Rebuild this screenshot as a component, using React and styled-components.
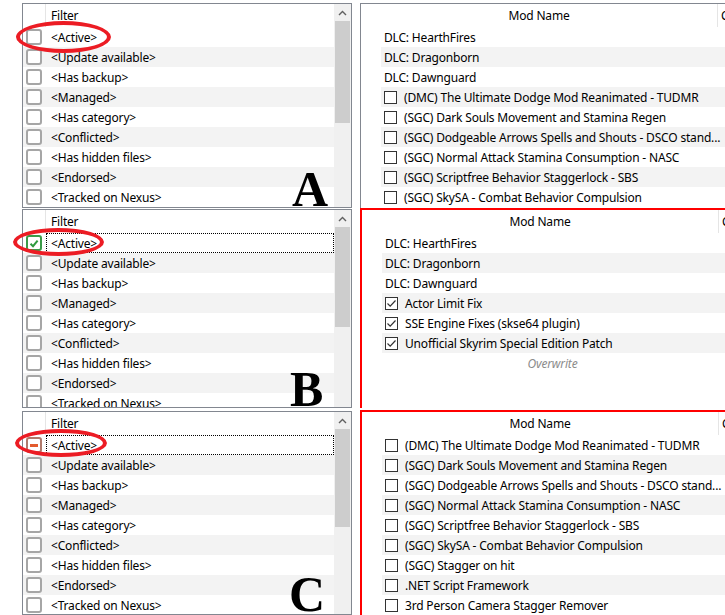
import React from 'react';
import styled, { createGlobalStyle } from 'styled-components';

const GlobalStyle = createGlobalStyle`
  html, body {
    margin: 0;
    padding: 0;
    background: #fff;
  }
  body {
    font-family: "Noto Sans", "Open Sans", sans-serif;
    font-size: 12px;
    letter-spacing: -0.18px;
    color: #000;
  }
`;

const Page = styled.div`
  width: 725px;
  height: 615px;
  overflow: hidden;
  display: flex;
  flex-direction: column;
  background: #fff;
`;

// one cropped screenshot (A, B or C)
const Shot = styled.section`
  position: relative;
  flex: none;
  height: ${p => p.$height}px;
  display: grid;
  grid-template-columns: 330px 380px;
  column-gap: 8px;
  padding-left: 22px;
  box-sizing: border-box;
  overflow: hidden;
`;

const Letter = styled.div`
  position: absolute;
  left: ${p => p.$x}px;
  top: ${p => p.$y}px;
  font-family: "Liberation Serif", "Times New Roman", serif;
  font-weight: bold;
  font-size: 50px;
  letter-spacing: 0;
  line-height: 1;
  color: #000;
  pointer-events: none;
`;

const Ring = styled.div`
  position: absolute;
  left: ${p => p.$x}px;
  top: ${p => p.$y}px;
  width: ${p => p.$w}px;
  height: ${p => p.$h}px;
  box-sizing: border-box;
  border: 4.5px solid #ec1c24;
  border-radius: 50%;
  pointer-events: none;
`;

/* ---------- filter list ---------- */

const FilterFrame = styled.div`
  margin-top: ${p => p.$top}px;
  border: 1px solid #828790;
  display: grid;
  grid-template-columns: 1fr 17px;
  background: #fff;
  overflow: hidden;
  min-height: 0;
`;

const FilterList = styled.div`
  display: flex;
  flex-direction: column;
  min-width: 0;
  overflow: hidden;
`;

const FilterHeader = styled.div`
  flex: none;
  height: 23px;
  display: grid;
  grid-template-columns: 23px 1fr;
  align-items: center;
`;

const HeaderGap = styled.div`
  height: 100%;
  border-right: 1px solid #e5e5e5;
`;

const HeaderText = styled.div`
  padding-left: 5px;
`;

const FilterRow = styled.div`
  flex: none;
  height: 20px;
  display: grid;
  grid-template-columns: 23px 1fr;
  align-items: center;
  background: ${p => (p.$alt ? '#f3f3f3' : '#fff')};
`;

const CheckCell = styled.div`
  padding-left: 3px;
  display: flex;
  align-items: center;
`;

const FilterLabel = styled.div`
  height: 20px;
  box-sizing: border-box;
  display: flex;
  align-items: center;
  padding-left: 4px;
  border: 1px ${p => (p.$focus ? 'dotted #000' : 'solid transparent')};
  white-space: nowrap;
`;

const TriBox = styled.div`
  width: 16px;
  height: 16px;
  box-sizing: border-box;
  border: 2px solid ${p => p.$color};
  border-radius: 3px;
  background: #fff;
  display: flex;
  align-items: center;
  justify-content: center;
`;

const Dash = styled.div`
  width: 8px;
  height: 3px;
  background: #e35b2f;
`;

const ScrollBar = styled.div`
  background: #f0f0f0;
  display: flex;
  flex-direction: column;
`;

const ScrollArrow = styled.div`
  flex: none;
  height: 17px;
  display: flex;
  align-items: center;
  justify-content: center;
`;

const ScrollThumb = styled.div`
  flex: none;
  margin: 0 1px;
  height: ${p => p.$h}px;
  background: #cdcdcd;
`;

/* ---------- mod list ---------- */

const ModFrame = styled.div`
  margin-top: ${p => p.$top}px;
  border: ${p => (p.$filtered ? '2px solid #ff0000' : '1px solid #828790')};
  border-right: none;
  border-bottom: none;
  display: flex;
  flex-direction: column;
  background: #fff;
  overflow: hidden;
  min-height: 0;
`;

const ModHeader = styled.div`
  flex: none;
  height: 23px;
  display: grid;
  grid-template-columns: 357px 1fr;
  align-items: center;
`;

const ModHeaderCell = styled.div`
  height: 100%;
  display: flex;
  align-items: center;
  justify-content: ${p => (p.$first ? 'center' : 'flex-start')};
  padding-left: ${p => (p.$first ? 0 : 3)}px;
  border-right: ${p => (p.$first ? '1px solid #e5e5e5' : 'none')};
  white-space: nowrap;
  overflow: hidden;
`;

const ModRow = styled.div`
  flex: none;
  height: 20px;
  margin-left: 20px;
  padding-left: 3px;
  display: flex;
  align-items: center;
  gap: 7px;
  justify-content: ${p => (p.$center ? 'center' : 'flex-start')};
  background: ${p => (p.$alt ? '#f3f3f3' : '#fff')};
  white-space: nowrap;
`;

const ModBox = styled.div`
  flex: none;
  width: 13px;
  height: 13px;
  box-sizing: border-box;
  border: 1px solid #333;
  background: #fff;
  display: flex;
  align-items: center;
  justify-content: center;
`;

const OverwriteText = styled.span`
  font-style: italic;
  color: #8c8c8c;
  margin-right: 20px;
`;

const FILTERS = [
  '<Active>',
  '<Update available>',
  '<Has backup>',
  '<Managed>',
  '<Has category>',
  '<Conflicted>',
  '<Has hidden files>',
  '<Endorsed>',
  '<Tracked on Nexus>',
];

const UpArrow = () => (
  <svg width="9" height="6" viewBox="0 0 9 6">
    <path d="M1 5 L4.5 1.5 L8 5" fill="none" stroke="#606060" strokeWidth="1.4" />
  </svg>
);

const GreenTick = () => (
  <svg width="10" height="9" viewBox="0 0 10 9">
    <path d="M1.5 4.8 L4 7.2 L8.6 1.6" fill="none" stroke="#2f9a3e" strokeWidth="2" />
  </svg>
);

const DarkTick = () => (
  <svg width="11" height="11" viewBox="0 0 11 11">
    <path d="M1.5 5.5 L4.2 8.2 L9.5 2.5" fill="none" stroke="#333" strokeWidth="1.2" />
  </svg>
);

function FilterCheck({ state }) {
  if (state === 'on') {
    return (
      <TriBox $color="#3b9b48">
        <GreenTick />
      </TriBox>
    );
  }
  if (state === 'not') {
    return (
      <TriBox $color="#b07a6c">
        <Dash />
      </TriBox>
    );
  }
  return <TriBox $color="#a6a6a6" />;
}

function FilterPanel({ top, activeState, focus, thumb }) {
  return (
    <FilterFrame $top={top}>
      <FilterList>
        <FilterHeader>
          <HeaderGap />
          <HeaderText>Filter</HeaderText>
        </FilterHeader>
        {FILTERS.map((name, i) => (
          <FilterRow key={name} $alt={i % 2 === 1}>
            <CheckCell>
              <FilterCheck state={i === 0 ? activeState : 'off'} />
            </CheckCell>
            <FilterLabel $focus={focus && i === 0}>{name}</FilterLabel>
          </FilterRow>
        ))}
      </FilterList>
      <ScrollBar>
        <ScrollArrow>
          <UpArrow />
        </ScrollArrow>
        <ScrollThumb $h={thumb} />
      </ScrollBar>
    </FilterFrame>
  );
}

function ModPanel({ top, filtered, mods }) {
  return (
    <ModFrame $top={top} $filtered={filtered}>
      <ModHeader>
        <ModHeaderCell $first>Mod Name</ModHeaderCell>
        <ModHeaderCell>Conflicts</ModHeaderCell>
      </ModHeader>
      {mods.map((m, i) => {
        if (m.overwrite) {
          return (
            <ModRow key="ow" $center>
              <OverwriteText>Overwrite</OverwriteText>
            </ModRow>
          );
        }
        return (
          <ModRow key={m.name} $alt={i % 2 === 1}>
            {!m.dlc && <ModBox>{m.checked && <DarkTick />}</ModBox>}
            <span>{m.name}</span>
          </ModRow>
        );
      })}
    </ModFrame>
  );
}

const DLC = [
  { name: 'DLC: HearthFires', dlc: true },
  { name: 'DLC: Dragonborn', dlc: true },
  { name: 'DLC: Dawnguard', dlc: true },
];

const SGC = [
  { name: '(DMC) The Ultimate Dodge Mod Reanimated - TUDMR' },
  { name: '(SGC) Dark Souls Movement and Stamina Regen' },
  { name: '(SGC) Dodgeable Arrows Spells and Shouts - DSCO stand...' },
  { name: '(SGC) Normal Attack Stamina Consumption - NASC' },
  { name: '(SGC) Scriptfree Behavior Staggerlock - SBS' },
  { name: '(SGC) SkySA - Combat Behavior Compulsion' },
];

const MODS_A = [...DLC, ...SGC];

const MODS_B = [
  ...DLC,
  { name: 'Actor Limit Fix', checked: true },
  { name: 'SSE Engine Fixes (skse64 plugin)', checked: true },
  { name: 'Unofficial Skyrim Special Edition Patch', checked: true },
  { overwrite: true },
];

const MODS_C = [
  ...SGC,
  { name: '(SGC) Stagger on hit' },
  { name: '.NET Script Framework' },
  { name: '3rd Person Camera Stagger Remover' },
];

export default function App() {
  return (
    <Page>
      <GlobalStyle />
      <Shot $height={208}>
        <FilterPanel top={3} activeState="off" thumb={102} />
        <ModPanel top={3} mods={MODS_A} />
        <Ring $x={16} $y={21} $w={95} $h={32} />
        <Letter $x={292} $y={164}>A</Letter>
      </Shot>
      <Shot $height={200}>
        <FilterPanel top={1} activeState="on" focus thumb={100} />
        <ModPanel top={0} filtered mods={MODS_B} />
        <Ring $x={13} $y={20} $w={91} $h={28} />
        <Letter $x={290} $y={156}>B</Letter>
      </Shot>
      <Shot $height={207}>
        <FilterPanel top={3} activeState="not" focus thumb={98} />
        <ModPanel top={2} filtered mods={MODS_C} />
        <Ring $x={15} $y={21} $w={92} $h={28} />
        <Letter $x={289} $y={161}>C</Letter>
      </Shot>
    </Page>
  );
}
